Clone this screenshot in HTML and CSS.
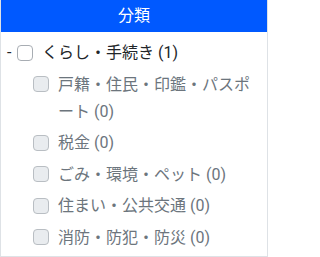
FILE: index.html
```html
<!DOCTYPE html>
<html lang="ja">
<head>
<meta charset="utf-8">
<link rel="stylesheet" href="styles.css">
</head>
<body>
<div class="panel">
  <div class="panel-header">分類</div>
  <ul class="tree">
    <li class="node">
      <div class="row parent-row">
        <span class="toggle">-</span>
        <span class="check"></span>
        <span class="label">くらし・手続き (1)</span>
      </div>
      <ul class="children">
        <li class="row child-row"><span class="check disabled"></span><span class="label">戸籍・住民・印鑑・パスポート (0)</span></li>
        <li class="row child-row"><span class="check disabled"></span><span class="label">税金 (0)</span></li>
        <li class="row child-row"><span class="check disabled"></span><span class="label">ごみ・環境・ペット (0)</span></li>
        <li class="row child-row"><span class="check disabled"></span><span class="label">住まい・公共交通 (0)</span></li>
        <li class="row child-row"><span class="check disabled"></span><span class="label">消防・防犯・防災 (0)</span></li>
      </ul>
    </li>
  </ul>
</div>
</body>
</html>
```
FILE: styles.css
```css
html, body {
  margin: 0;
  padding: 0;
  background: #ffffff;
}
body {
  font-family: Roboto, "Noto Sans CJK JP", sans-serif;
  font-size: 16px;
  color: #212529;
}
.panel {
  width: 268px;
  height: 257px;
  box-sizing: border-box;
  border: 1px solid #dee2e6;
  border-top: 0;
  overflow: hidden;
}
.panel-header {
  background: #0059ff;
  color: #ffffff;
  height: 32px;
  line-height: 32px;
  text-align: center;
  font-size: 16px;
}
.tree {
  list-style: none;
  margin: 0;
  padding: 7px 8px 0 6px;
}
.children {
  list-style: none;
  margin: 4.5px 0 0 0;
  padding: 0 0 0 26px;
}
.row {
  display: flex;
  align-items: flex-start;
  line-height: 27px;
}
.child-row {
  margin-bottom: 4.5px;
  color: #6c757d;
}
.toggle {
  width: 10px;
  flex: none;
}
.check {
  flex: none;
  width: 16px;
  height: 16px;
  box-sizing: border-box;
  border: 1px solid #a8adb3;
  border-radius: 4px;
  background: #ffffff;
  margin-top: 5.5px;
  margin-right: 9px;
}
.check.disabled {
  background: #e9ecef;
  border-color: #b9bec3;
}
.label {
  flex: 1;
  min-width: 0;
}
```
